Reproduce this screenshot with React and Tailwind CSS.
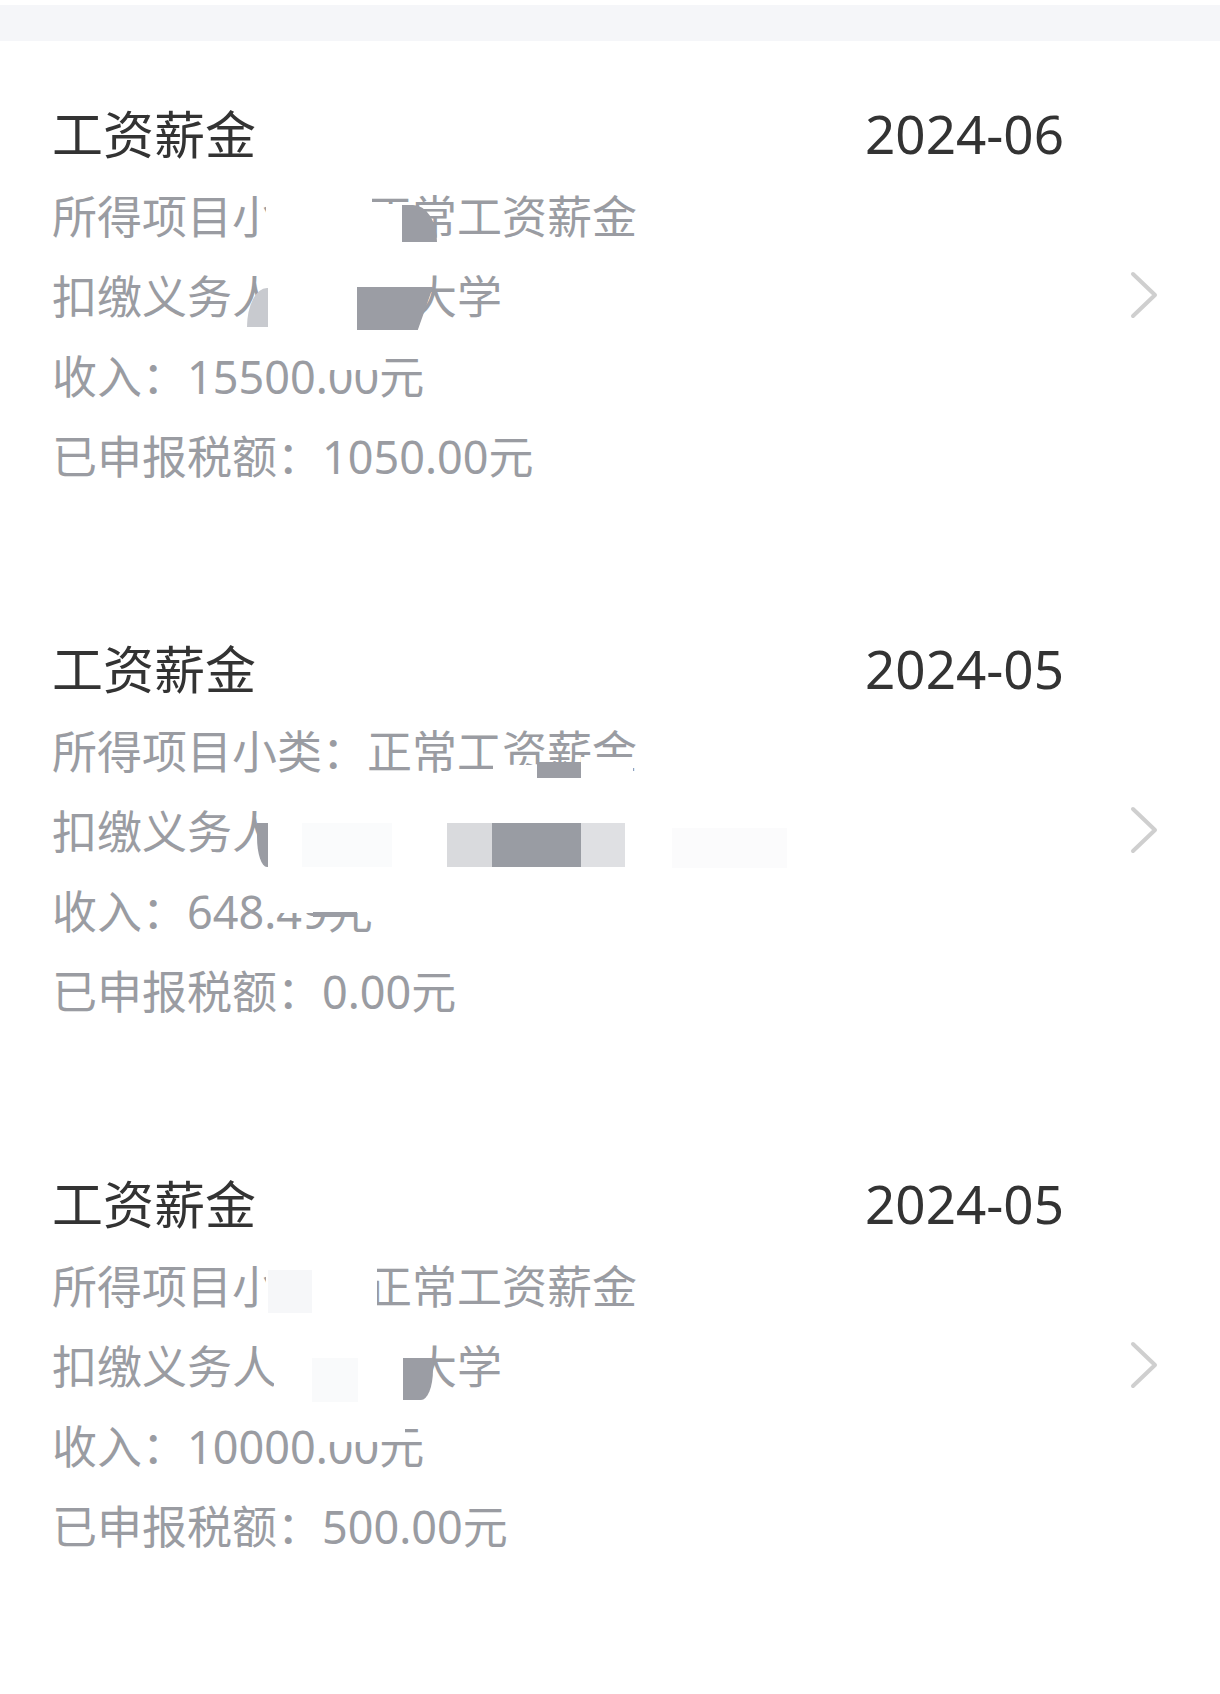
const Payer = () => (
  <>
    扣缴义务人：<span className="inline-block w-[90px]" />大学
  </>
);

const records = [
  {
    month: "2024-06",
    income: "收入：15500.00元",
    tax: "已申报税额：1050.00元",
    masks: [
      [
        "left-[214px] top-[8px] w-[106px] h-[65px] bg-white",
        "left-[320px] top-[27px] w-[30px] h-[46px] bg-white",
        "left-[350px] top-[28px] w-[35px] h-[37px] bg-[#9b9da4] rounded-tr-[24px_37px]",
      ],
      [
        "left-[216px] top-[18px] w-[89px] h-[60px] bg-white",
        "left-[195px] top-[31px] w-[21px] h-[39px] bg-[#c8cacf] rounded-tl-[20px_39px]",
        "left-[305px] top-[30px] w-[76px] h-[43px] bg-[#9b9da4] [clip-path:polygon(0_0,100%_0,80%_100%,0_100%)]",
      ],
      ["left-[278px] top-[15px] w-[55px] h-[18px] bg-white"],
      [],
    ],
  },
  {
    month: "2024-05",
    income: "收入：648.49元",
    tax: "已申报税额：0.00元",
    masks: [
      [
        "left-[441px] top-[53px] w-[88px] h-[19px] bg-white",
        "left-[485px] top-[50px] w-[44px] h-[16px] bg-[#9b9da4]",
        "left-[529px] top-[45px] w-[52px] h-[27px] bg-white",
      ],
      [
        "left-[216px] top-[16px] w-[560px] h-[62px] bg-white",
        "left-[205px] top-[31px] w-[11px] h-[44px] bg-[#9a9ca3] rounded-bl-[10px_30px]",
        "left-[250px] top-[31px] w-[90px] h-[44px] bg-[#fafbfc]",
        "left-[395px] top-[31px] w-[45px] h-[44px] bg-[#d9dadd]",
        "left-[440px] top-[31px] w-[89px] h-[44px] bg-[#999ca3]",
        "left-[529px] top-[31px] w-[44px] h-[44px] bg-[#dfe0e3]",
        "left-[620px] top-[36px] w-[115px] h-[40px] bg-[#fbfbfc]",
      ],
      [
        "left-[221px] top-[8px] w-[110px] h-[33px] bg-white",
        "left-[261px] top-[40px] w-[44px] h-[5px] bg-[#9b9da4]",
      ],
      [],
    ],
  },
  {
    month: "2024-05",
    income: "收入：10000.00元",
    tax: "已申报税额：500.00元",
    masks: [
      [
        "left-[214px] top-[12px] w-[111px] h-[58px] bg-white",
        "left-[216px] top-[23px] w-[44px] h-[43px] bg-[#f6f7f9]",
      ],
      [
        "left-[222px] top-[15px] w-[129px] h-[62px] bg-white",
        "left-[260px] top-[31px] w-[46px] h-[44px] bg-[#f9fafb]",
        "left-[351px] top-[31px] w-[30px] h-[42px] bg-[#9b9da4] rounded-br-[12px_30px]",
      ],
      ["left-[275px] top-[18px] w-[78px] h-[17px] bg-white"],
      [],
    ],
  },
];

const Chevron = () => (
  <svg width="28" height="48" viewBox="0 0 28 48" className="self-start mt-[167px] ml-[66px] shrink-0">
    <polyline
      points="3,3 25,24 3,45"
      fill="none"
      stroke="#cfcfcf"
      strokeWidth="4"
      strokeLinecap="round"
      strokeLinejoin="round"
    />
  </svg>
);

const Line = ({ children, masks }) => (
  <div className="relative leading-[80px] whitespace-nowrap">
    {children}
    {masks.map((m, i) => (
      <span key={i} className={"absolute " + m} />
    ))}
  </div>
);

const Record = ({ r }) => {
  const lines = ["所得项目小类：正常工资薪金", <Payer />, r.income, r.tax];
  return (
    <div className="flex pl-[52px] pr-[62px] pt-[63px] pb-[79px]">
      <div className="flex-1 min-w-0">
        <div className="flex justify-between items-center h-[60px] text-[#333333]">
          <span className="text-[51px] leading-[60px]">工资薪金</span>
          <span className="text-[53px] leading-[60px]">{r.month}</span>
        </div>
        <div className="mt-[13px] text-[45px] text-[#9a9ca2]">
          {lines.map((t, i) => (
            <Line key={i} masks={r.masks[i]}>
              {t}
            </Line>
          ))}
        </div>
      </div>
      <Chevron />
    </div>
  );
};

export default function App() {
  return (
    <div className="w-[1220px] min-h-[1694px] bg-white font-['Noto_Sans','Noto_Sans_CJK_SC',sans-serif]">
      <div className="h-[5px]" />
      <div className="h-[36px] bg-[#f5f6f9]" />
      {records.map((r, i) => (
        <Record key={i} r={r} />
      ))}
    </div>
  );
}
